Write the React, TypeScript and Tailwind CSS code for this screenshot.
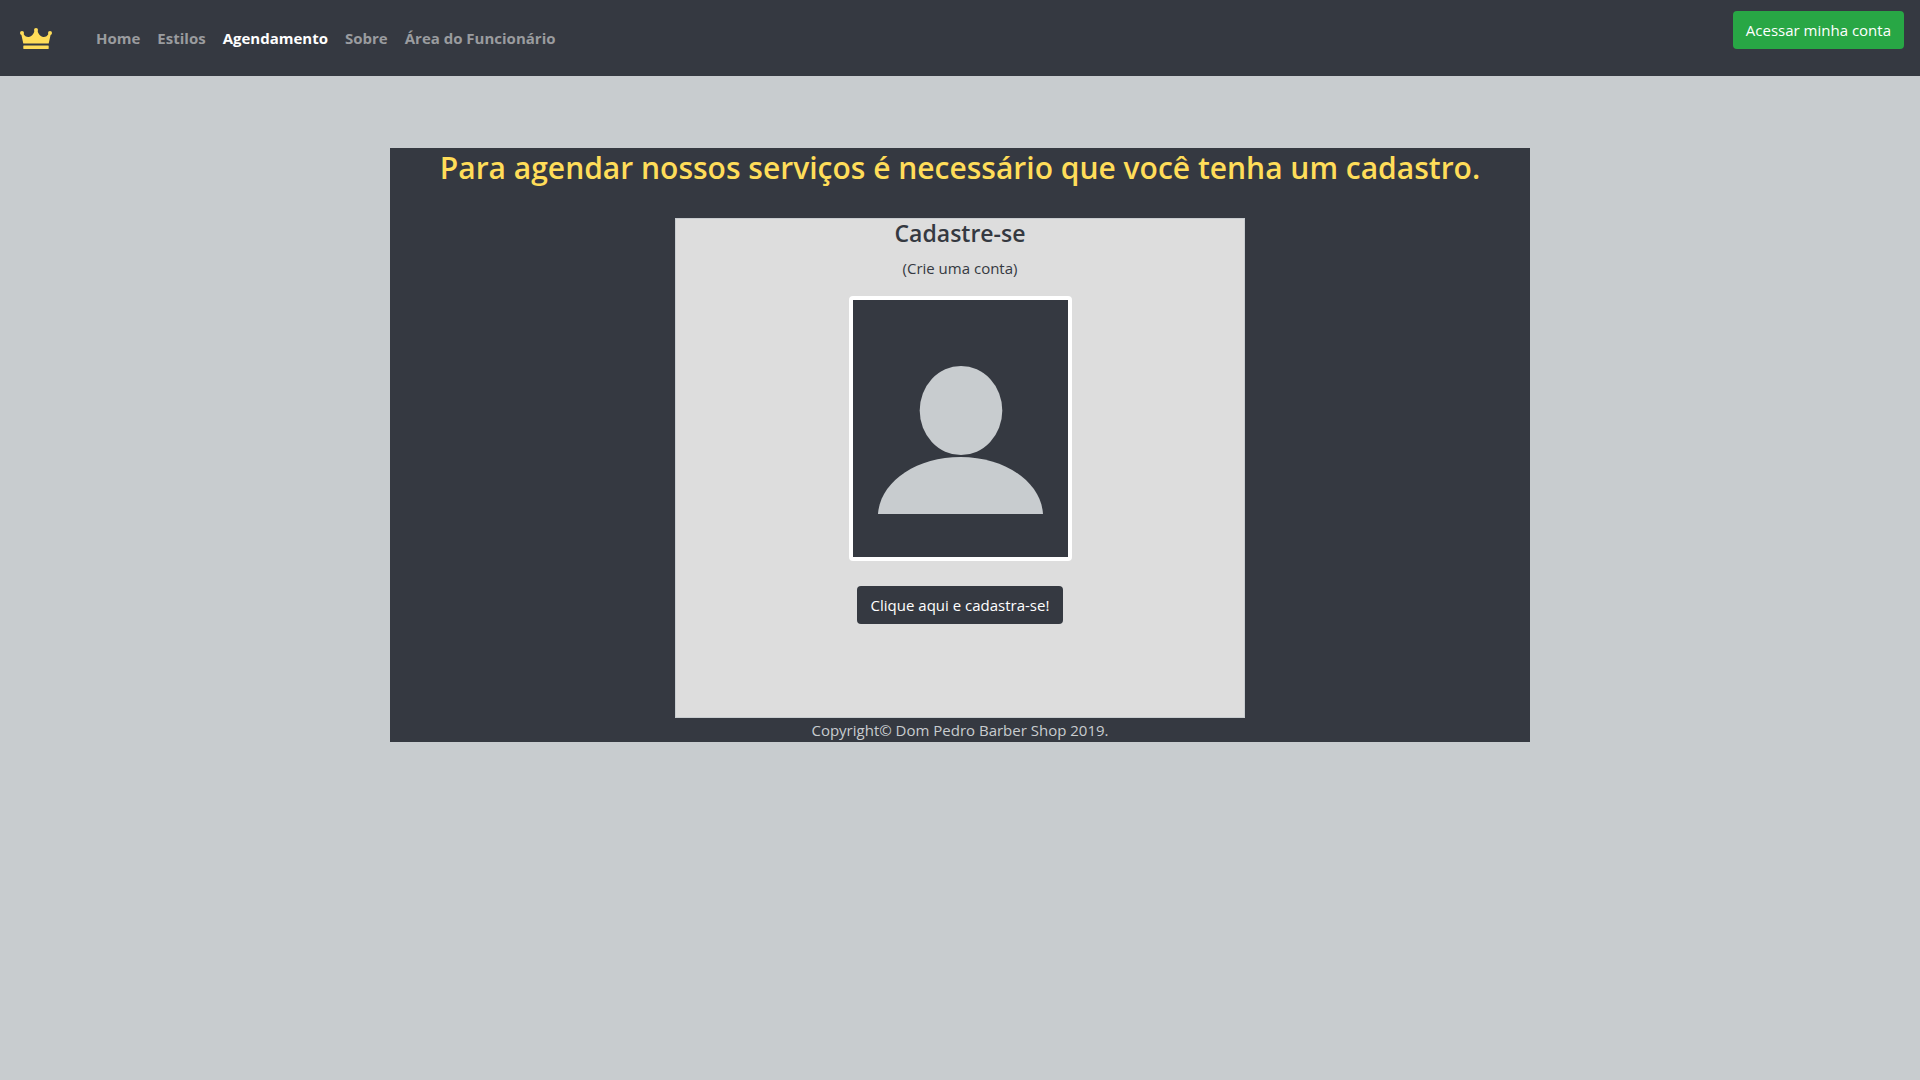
import React from "react";

const links = [
  { label: "Home", active: false },
  { label: "Estilos", active: false },
  { label: "Agendamento", active: true },
  { label: "Sobre", active: false },
  { label: "Área do Funcionário", active: false },
];

function Crown() {
  return (
    <svg viewBox="0 0 32 21" className="h-[21px] w-8" fill="#ffdd59" aria-hidden="true">
      <circle cx="2" cy="5" r="2" />
      <circle cx="16" cy="2" r="2" />
      <circle cx="30" cy="5" r="2" />
      <path d="M1.2 6 L3.2 5.5 Q5.500 9.500 9 9 Q13 8.200 14.500 3 H17.500 Q19 8.200 23 9 Q26.500 9.500 28.800 5.500 L30.800 6 L28.700 15.500 H3.300 Z" />
      <rect x="3.300" y="17.500" width="25.400" height="3.500" rx="0.400" />
    </svg>
  );
}

function Avatar() {
  return (
    <svg
      viewBox="0 0 215 257"
      className="h-[257px] w-[215px] bg-[#353941]"
      role="img"
      aria-label="Cadastro"
      fill="#c8cccf"
    >
      <ellipse cx="108" cy="110.500" rx="41.300" ry="44.600" />
      <path d="M25 214 C27 182 63 157 107.500 157 S188 182 190 214 Z" />
    </svg>
  );
}

export default function App() {
  return (
    <div className="min-h-screen bg-[#c8cccf] font-['Open_Sans','Noto_Sans',sans-serif] text-[15px] leading-6 text-[#353941]">
      <nav className="flex min-h-[76px] items-center bg-[#353941] px-4">
        <a href="#" aria-label="Dom Pedro Barber Shop" className="mr-9 ml-1">
          <Crown />
        </a>
        <ul className="flex flex-1 gap-px font-bold">
          {links.map((l) => (
            <li key={l.label}>
              <a
                href="#"
                className={l.active ? "block p-2 text-white" : "block p-2 text-[#9a9c9f]"}
              >
                {l.label}
              </a>
            </li>
          ))}
        </ul>
        <button className="mt-[11px] h-[38px] self-start rounded bg-[#28a745] px-[13px] text-white">
          Acessar minha conta
        </button>
      </nav>

      <main className="mx-auto mt-[72px] flex max-w-[1140px] flex-col items-center bg-[#353941] text-center">
        <h1 className="mb-[30px] text-[30px] leading-10 font-semibold text-[#ffdd59]">
          Para agendar nossos serviços é necessário que você tenha um cadastro.
        </h1>
        <section className="flex min-h-[500px] w-1/2 flex-col items-center border border-[#c8cccf] bg-[#dddddd]">
          <h2 className="mb-2 text-[23px] leading-[29px] font-semibold">Cadastre-se</h2>
          <p className="mb-4">(Crie uma conta)</p>
          <div className="rounded bg-white p-1">
            <Avatar />
          </div>
          <button className="mt-[25px] h-[38px] rounded bg-[#353941] px-[14px] text-white">
            Clique aqui e cadastra-se!
          </button>
        </section>
        <footer className="text-[#c8cccf]">Copyright© Dom Pedro Barber Shop 2019.</footer>
      </main>
    </div>
  );
}
